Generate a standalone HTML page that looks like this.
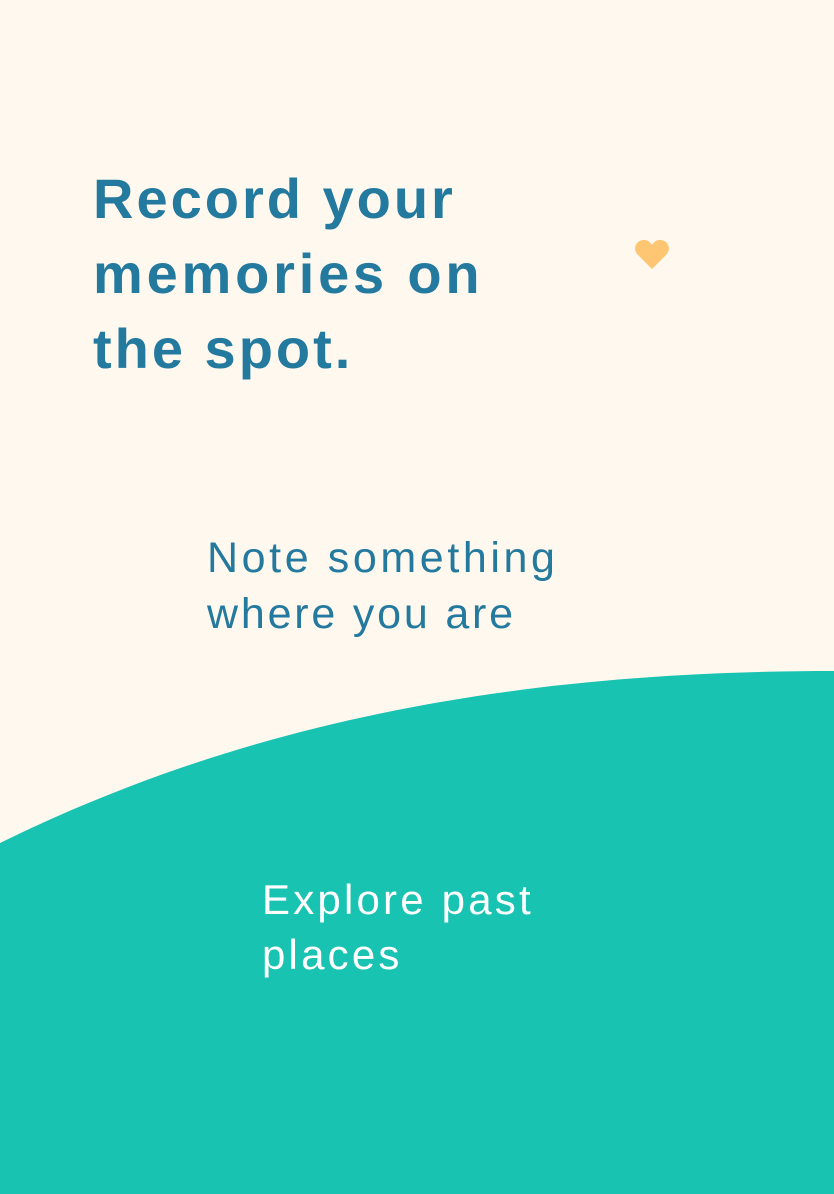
<!DOCTYPE html>
<html><head><meta charset="utf-8"><style>
html,body{margin:0;padding:0}
body{width:834px;height:1194px;background:#fef8ee;position:relative;overflow:hidden;font-family:"Liberation Sans",sans-serif}
.l{position:absolute;white-space:nowrap;line-height:1}
.t{font-weight:bold;font-size:56px;color:#23799e;letter-spacing:3px;left:93px}
.s{font-size:43px;color:#23799e;left:207px;letter-spacing:3.6px}
.w{font-size:42px;color:#fff;left:262px;letter-spacing:3.2px}
</style></head><body>
<svg style="position:absolute;left:0;top:0" width="834" height="1194"><path d="M0 843 C 250 720, 520 671, 834 671 L834 1194 L0 1194 Z" fill="#18c3b2"/>
<path d="M652 269 L638 255 C632 249 636 240 644 240 C648 240 650 242 652 245 C654 242 656 240 660 240 C668 240 672 249 666 255 Z" fill="#fec572"/></svg>
<div class="l t" style="top:171px">Record your</div>
<div class="l t" style="top:246px;letter-spacing:3.8px">memories on</div>
<div class="l t" style="top:321px">the spot.</div>
<div class="l s" style="top:537px">Note something</div>
<div class="l s" style="top:593px;letter-spacing:2.8px">where you are</div>
<div class="l w" style="top:879px">Explore past</div>
<div class="l w" style="top:934px">places</div>
</body></html>
